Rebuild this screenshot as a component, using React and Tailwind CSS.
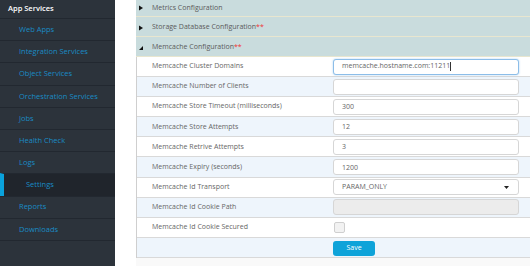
import React from 'react';

const NAV = [
  'Web Apps',
  'Integration Services',
  'Object Services',
  'Orchestration Services',
  'Jobs',
  'Health Check',
  'Logs',
  'Settings',
  'Reports',
  'Downloads',
];

const Arrow = ({ open }) =>
  open ? (
    <svg width="6" height="6" viewBox="0 0 6 6" className="shrink-0">
      <path d="M5 1 L5 5 L1 5 Z" fill="#111" />
    </svg>
  ) : (
    <svg width="6" height="6" viewBox="0 0 6 6" className="shrink-0">
      <path d="M1 0.5 L5 3 L1 5.5 Z" fill="#111" />
    </svg>
  );

const Section = ({ title, open, required, h }) => (
  <div className={`flex items-center gap-[8px] pl-[2px] border-b border-[#e8e6cf] bg-[#c9dcdd] text-[7px] text-[#5a5a5a] ${h}`}>
    <Arrow open={open} />
    <span>
      {title}
      {required && <span className="text-[#e33]">**</span>}
    </span>
  </div>
);

const inputCls =
  'w-[186px] h-[16px] rounded-[3px] border border-[#d6d6d6] bg-white px-[8px] text-[7px] text-[#666] outline-none';

const Field = ({ value }) => <input readOnly defaultValue={value} className={inputCls} />;

const ROWS = [
  {
    label: 'Memcache Cluster Domains',
    control: (
      <div className="w-[186px] h-[16px] rounded-[3px] border border-[#8cbde8] shadow-[0_0_2px_rgba(102,175,233,0.6)] bg-white px-[8px] flex items-center text-[7px] text-[#666]">
        memcache.hostname.com:11211<span className="w-px h-[9px] bg-[#333]" />
      </div>
    ),
  },
  { label: 'Memcache Number of Clients', control: <Field value="" /> },
  { label: 'Memcache Store Timeout (milliseconds)', control: <Field value="300" /> },
  { label: 'Memcache Store Attempts', control: <Field value="12" /> },
  { label: 'Memcache Retrive Attempts', control: <Field value="3" /> },
  { label: 'Memcache Expiry (seconds)', control: <Field value="1200" /> },
  {
    label: 'Memcache Id Transport',
    control: (
      <div className="w-[186px] h-[16px] rounded-[3px] border border-[#d6d6d6] bg-white pl-[8px] pr-[9px] flex items-center justify-between text-[7px] text-[#666]">
        <span>PARAM_ONLY</span>
        <svg width="5" height="3" viewBox="0 0 5 3">
          <path d="M0 0 L5 0 L2.5 3 Z" fill="#222" />
        </svg>
      </div>
    ),
  },
  {
    label: 'Memcache Id Cookie Path',
    control: <div className="w-[186px] h-[16px] rounded-[3px] border border-[#d6d6d6] bg-[#ececec]" />,
  },
  {
    label: 'Memcache Id Cookie Secured',
    control: <div className="ml-[1px] w-[11px] h-[11px] rounded-[2px] border border-[#cfcfcf] bg-[#f2f2f2]" />,
  },
  {
    label: '',
    control: (
      <button className="mt-[2px] w-[42px] h-[15px] rounded-[3px] bg-[#0ea3d9] text-white text-[7px] flex items-center justify-center">
        Save
      </button>
    ),
  },
];

export default function App() {
  return (
    <div className="flex w-[530px] h-[266px] overflow-hidden bg-white font-['Open_Sans',sans-serif]">
      <aside className="w-[115px] shrink-0 bg-[#2c333b]">
        <div className="h-[18px] pl-[8px] flex items-center text-[7.5px] font-semibold text-white">
          App Services
        </div>
        {NAV.map((item) => {
          const active = item === 'Settings';
          return (
            <div
              key={item}
              className={`h-[22.2px] flex items-center border-t border-[#222830] text-[7.5px] text-[#1a8bc5] ${
                active ? 'bg-[#20252c] border-l-[4px] border-l-[#0aa2dc] pl-[22px]' : 'pl-[19px]'
              }`}
            >
              {item}
            </div>
          );
        })}
        <div className="border-t border-[#222830]" />
      </aside>

      <main className="ml-[21px] flex-1 flex flex-col">
        <Section title="Metrics Configuration" h="h-[17px]" />
        <Section title="Storage Database Configuration" required h="h-[20px] pt-[2px]" />
        <Section title="Memcache Configuration" required open h="h-[20px] pt-[2px]" />
        <div className="border-l border-[#cfcfcf]">
          {ROWS.map((row, i) => (
            <div
              key={i}
              className={`h-[20.1px] flex items-center border-b border-[#d9d9d9] ${
                i % 2 ? 'bg-[#eef5fc]' : 'bg-white'
              }`}
            >
              <div className="w-[196px] shrink-0 pl-[15px] text-[7px] text-[#666]">{row.label}</div>
              {row.control}
            </div>
          ))}
        </div>
        <div className="flex-1 bg-[#f9f9f9]" />
      </main>
    </div>
  );
}
